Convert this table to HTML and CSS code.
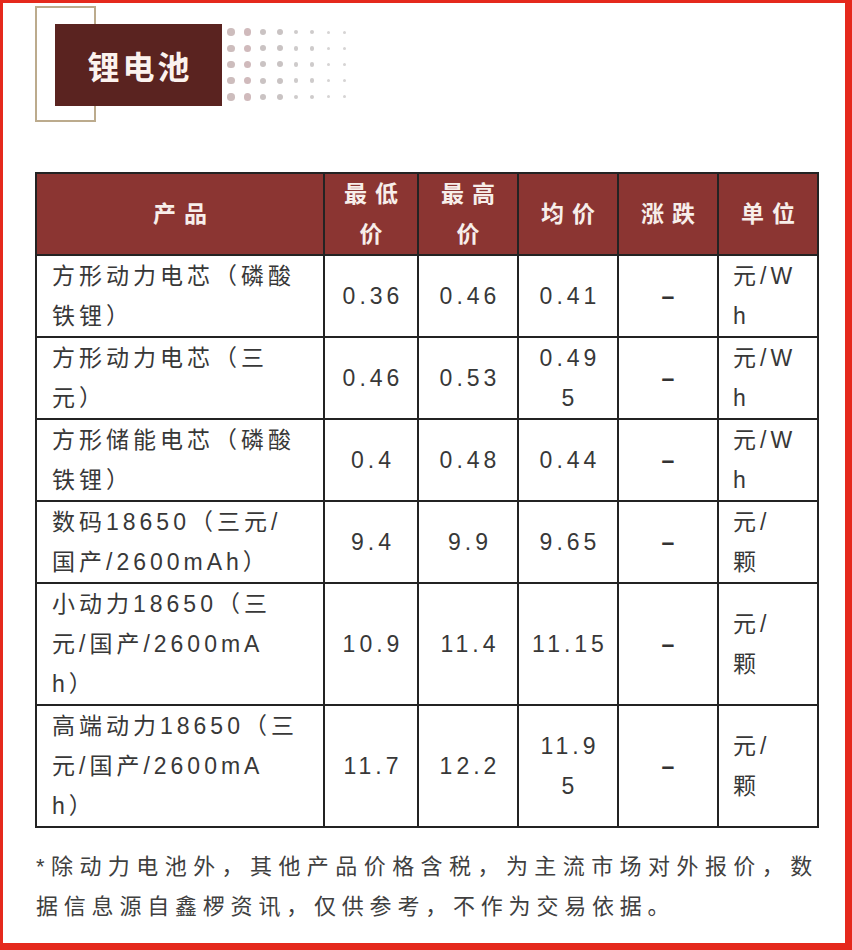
FILE: index.html
```html
<!DOCTYPE html>
<html lang="zh-CN">
<head>
<meta charset="utf-8">
<title>锂电池</title>
<link rel="stylesheet" href="styles.css">
</head>
<body>
<div class="page">
  <div class="banner">
    <div class="title">锂电池</div>
    <div class="dots">
      <span></span><span></span><span></span><span></span><span></span><span></span><span></span><span></span>
      <span></span><span></span><span></span><span></span><span></span><span></span><span></span><span></span>
      <span></span><span></span><span></span><span></span><span></span><span></span><span></span><span></span>
      <span></span><span></span><span></span><span></span><span></span><span></span><span></span><span></span>
      <span></span><span></span><span></span><span></span><span></span><span></span><span></span><span></span>
    </div>
  </div>

  <table class="prices">
    <colgroup>
      <col class="c-name"><col class="c-low"><col class="c-num"><col class="c-num"><col class="c-num"><col class="c-num">
    </colgroup>
    <thead>
      <tr><th>产品</th><th>最低<br>价</th><th>最高<br>价</th><th>均价</th><th>涨跌</th><th>单位</th></tr>
    </thead>
    <tbody>
      <tr><td class="name">方形动力电芯（磷酸<br>铁锂）</td><td>0.36</td><td>0.46</td><td>0.41</td><td class="chg">–</td><td class="unit">元/W<br>h</td></tr>
      <tr><td class="name">方形动力电芯（三<br>元）</td><td>0.46</td><td>0.53</td><td>0.49<br>5</td><td class="chg">–</td><td class="unit">元/W<br>h</td></tr>
      <tr><td class="name">方形储能电芯（磷酸<br>铁锂）</td><td>0.4</td><td>0.48</td><td>0.44</td><td class="chg">–</td><td class="unit">元/W<br>h</td></tr>
      <tr><td class="name">数码18650（三元/<br>国产/2600mAh）</td><td>9.4</td><td>9.9</td><td>9.65</td><td class="chg">–</td><td class="unit">元/<br>颗</td></tr>
      <tr><td class="name">小动力18650（三<br>元/国产/2600mA<br>h）</td><td>10.9</td><td>11.4</td><td>11.15</td><td class="chg">–</td><td class="unit">元/<br>颗</td></tr>
      <tr><td class="name">高端动力18650（三<br>元/国产/2600mA<br>h）</td><td>11.7</td><td>12.2</td><td>11.9<br>5</td><td class="chg">–</td><td class="unit">元/<br>颗</td></tr>
    </tbody>
  </table>

  <p class="note">*除动力电池外，其他产品价格含税，为主流市场对外报价，数据信息源自鑫椤资讯，仅供参考，不作为交易依据。</p>
</div>
</body>
</html>
```

FILE: styles.css
```css
html, body {
  margin: 0;
  padding: 0;
  background: #ffffff;
}

.page {
  width: 852px;
  height: 950px;
  box-sizing: border-box;
  border-style: solid;
  border-color: #e5291d;
  border-width: 3px 7px 7px 3px;
  background: #ffffff;
  padding-top: 21px;
  font-family: "Liberation Sans", "Noto Sans CJK SC", sans-serif;
  overflow: hidden;
}

.banner {
  position: relative;
  display: flex;
  align-items: flex-start;
  margin-left: 52px;
}

.banner::before {
  content: "";
  position: absolute;
  left: -20px;
  top: -18px;
  width: 57px;
  height: 112px;
  border: 2px solid #bcab8d;
}

.title {
  position: relative;
  width: 167px;
  height: 82px;
  background: #5a2320;
  color: #fbf2ee;
  font-family: "Noto Sans CJK SC", sans-serif;
  font-size: 32px;
  font-weight: 700;
  letter-spacing: 3px;
  display: flex;
  align-items: center;
  justify-content: center;
  padding-left: 3px;
  box-sizing: border-box;
}

.dots {
  display: grid;
  grid-template-columns: repeat(8, 16.2px);
  grid-auto-rows: 16.2px;
  place-items: center;
  margin-left: 1px;
}

.dots span {
  display: block;
  border-radius: 50%;
}

.dots span:nth-child(8n+1) { width: 7.5px; height: 7.5px; background: #cdbdbd; }
.dots span:nth-child(8n+2) { width: 7.5px; height: 7.5px; background: #d0babc; }
.dots span:nth-child(8n+3) { width: 6px; height: 6px; background: #cac3c3; }
.dots span:nth-child(8n+4) { width: 6px; height: 6px; background: #c9c3c3; }
.dots span:nth-child(8n+5) { width: 4.5px; height: 4.5px; background: #cecbcb; }
.dots span:nth-child(8n+6) { width: 4.5px; height: 4.5px; background: #cecbcb; }
.dots span:nth-child(8n+7) { width: 3px; height: 3px; background: #d6d4d4; }
.dots span:nth-child(8n) { width: 3px; height: 3px; background: #d6d4d4; }

.prices {
  margin: 66px 0 0 32px;
  border-collapse: collapse;
  table-layout: fixed;
  width: 782px;
}

.c-name { width: 288px; }
.c-low { width: 94px; }
.c-num { width: 100px; }

.prices th,
.prices td {
  border: 2px solid #232323;
  padding: 0 4px;
  line-height: 40px;
  font-size: 23px;
  white-space: nowrap;
  vertical-align: middle;
  text-align: center;
}

.prices th {
  background: #8b3532;
  color: #f7eeea;
  font-weight: 700;
  letter-spacing: 8px;
  padding-left: 12px;
}

.prices td {
  color: #383838;
  letter-spacing: 4px;
  padding-left: 8px;
}

.prices td.name {
  text-align: left;
  padding-left: 15px;
}

.prices td.unit {
  text-align: left;
  padding-left: 14px;
}

.prices td.chg {
  font-weight: bold;
  color: #333;
}

.note {
  width: 782px;
  margin: 19px 0 0 33px;
  font-size: 22px;
  line-height: 40px;
  letter-spacing: 5.8px;
  color: #404040;
  text-align: justify;
}
```
